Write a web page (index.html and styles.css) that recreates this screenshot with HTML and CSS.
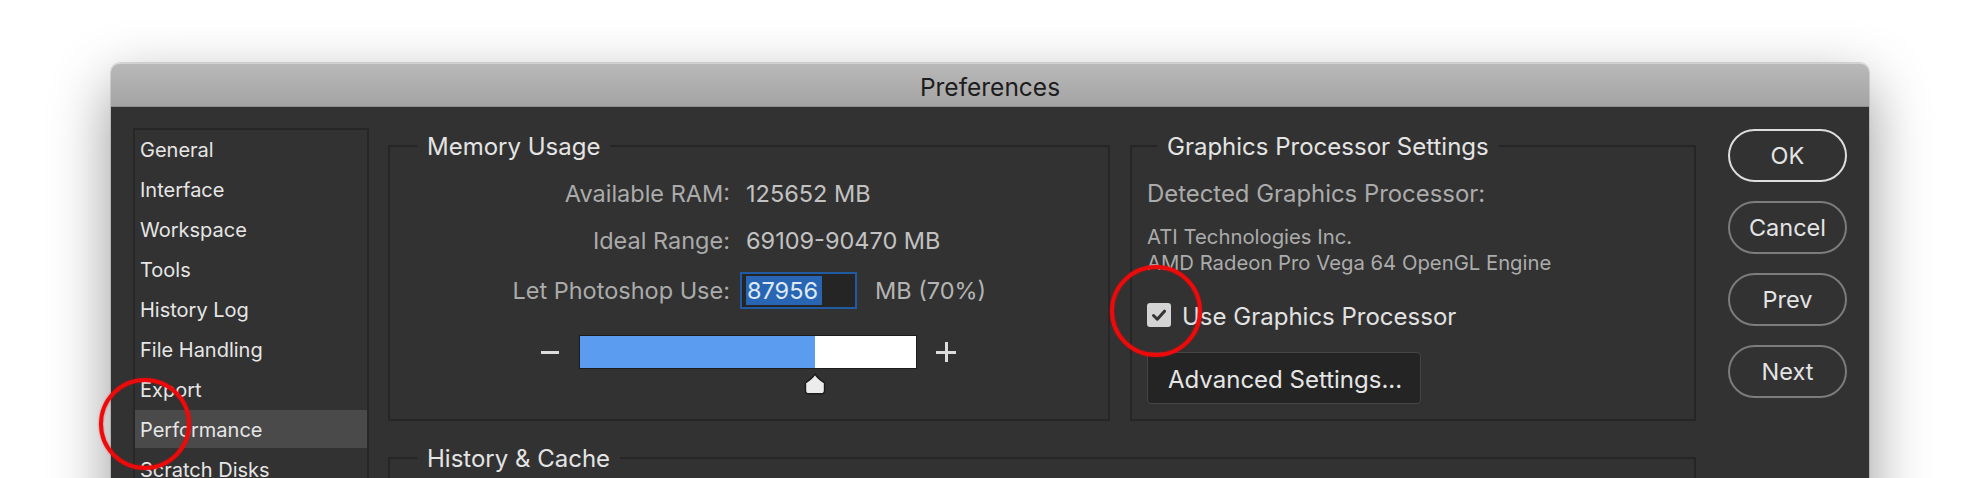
FILE: index.html
```html
<!DOCTYPE html>
<html>
<head>
<meta charset="utf-8">
<link rel="stylesheet" href="styles.css">
</head>
<body>
<div class="stage">
  <div class="window">
    <div class="titlebar">Preferences</div>
    <div class="wbody">
      <ul class="sidebar">
        <li>General</li>
        <li>Interface</li>
        <li>Workspace</li>
        <li>Tools</li>
        <li>History Log</li>
        <li>File Handling</li>
        <li>Export</li>
        <li class="active">Performance</li>
        <li>Scratch Disks</li>
        <li>Cursors</li>
      </ul>
      <div class="main">
        <div class="toprow">
          <fieldset class="group mem">
            <legend>Memory Usage</legend>
            <div class="rows">
              <div class="kv r1"><span class="k">Available RAM:</span><span class="v">125652 MB</span></div>
              <div class="kv r2"><span class="k">Ideal Range:</span><span class="v">69109-90470 MB</span></div>
              <div class="kv r3"><span class="k">Let Photoshop Use:</span><span class="input"><span class="sel">87956</span></span><span class="unit">MB (70%)</span></div>
              <div class="slider">
                <span class="minus"></span>
                <div class="track">
                  <div class="fill" style="width:70%"></div>
                  <svg class="thumb" style="left:70%" width="24" height="22" viewBox="0 0 24 22"><path d="M12 1.2 C14 4.5 17 7 21.5 10 L21.5 17.5 Q21.5 20.8 18.3 20.8 L5.7 20.8 Q2.5 20.8 2.5 17.5 L2.5 10 C7 7 10 4.5 12 1.2 Z" fill="#ececec" stroke="#1c1c1c" stroke-width="1.4"/></svg>
                </div>
                <span class="plus"></span>
              </div>
            </div>
          </fieldset>
          <fieldset class="group gpu">
            <legend>Graphics Processor Settings</legend>
            <div class="gpu-in">
              <div class="det">Detected Graphics Processor:</div>
              <div class="card">ATI Technologies Inc.<br>AMD Radeon Pro Vega 64 OpenGL Engine</div>
              <label class="check">
                <span class="box"><svg width="24" height="24" viewBox="0 0 24 24"><path d="M6.5 12.5 L10.3 16.2 L17.5 8.2" fill="none" stroke="#333" stroke-width="3" stroke-linecap="round" stroke-linejoin="round"/></svg></span>
                <span class="check-label">Use Graphics Processor</span>
              </label>
              <div class="adv">Advanced Settings...</div>
            </div>
          </fieldset>
        </div>
        <fieldset class="group hist">
          <legend>History &amp; Cache</legend>
          <div class="hist-in"></div>
        </fieldset>
      </div>
      <div class="buttons">
        <div class="btn primary">OK</div>
        <div class="btn">Cancel</div>
        <div class="btn">Prev</div>
        <div class="btn">Next</div>
      </div>
    </div>
    <div class="mark m1"></div>
    <div class="mark m2"></div>
  </div>
</div>
</body>
</html>
```

FILE: styles.css
```css
html, body {
  margin: 0;
  padding: 0;
  background: #ffffff;
  height: 478px;
  overflow: hidden;
  font-family: Inter, "Liberation Sans", Arial, sans-serif;
}

.stage {
  padding: 63px 0 0 111px;
}

.window {
  position: relative;
  width: 1758px;
  border-radius: 9px 9px 0 0;
  box-shadow: 0 22px 60px rgba(0, 0, 0, 0.42), 0 0 0 1px rgba(0, 0, 0, 0.12);
}

.titlebar {
  border-radius: 9px 9px 0 0;
  background: linear-gradient(#bab9ba, #a5a4a5);
  border-top: 1px solid #d2d2d2;
  border-bottom: 1px solid #8e8d8e;
  box-sizing: border-box;
  height: 44px;
  padding-top: 4px;
  display: flex;
  align-items: center;
  justify-content: center;
  font-size: 24.5px;
  color: #1d1d1d;
}

.wbody {
  background: #323232;
  display: flex;
  align-items: flex-start;
  padding: 21px 22px 0 22px;
  height: 430px;
  box-sizing: border-box;
}

.sidebar {
  list-style: none;
  margin: 0;
  padding: 2px 0 0 0;
  width: 236px;
  height: 420px;
  box-sizing: border-box;
  border: 2px solid #272727;
  flex: none;
}

.sidebar li {
  height: 36px;
  margin-bottom: 4px;
  display: flex;
  align-items: center;
  padding-left: 5px;
  font-size: 20px;
  color: #e6e6e6;
}

.sidebar li.active {
  background: #4a4a4a;
  margin-top: -2px;
  padding-top: 2px;
}

.main {
  width: 1308px;
  margin-left: 19px;
  margin-top: 3px;
  flex: none;
}

.toprow {
  display: flex;
  gap: 20px;
}

.group {
  margin: 0;
  padding: 0;
  min-width: 0;
  border: 2px solid #262626;
  box-sizing: border-box;
}

.group legend {
  padding: 0 10px;
  margin-left: 27px;
  font-size: 24px;
  line-height: 28px;
  padding-top: 2px;
  color: #e4e4e4;
}

.mem {
  width: 722px;
  height: 290px;
}

.gpu {
  width: 566px;
  height: 290px;
}

.gpu legend {
  margin-left: 25px;
}

.rows {
  padding-top: 12px;
}

.kv {
  display: grid;
  grid-template-columns: 340px auto auto;
  justify-content: start;
  align-items: center;
  column-gap: 10px;
  height: 40px;
  font-size: 23.5px;
}

.r2 {
  margin-top: 7px;
}

.r3 {
  margin-top: 10px;
}

.k {
  text-align: right;
  color: #ababab;
}

.v {
  padding-left: 6px;
  color: #c2c2c2;
}

.input {
  width: 117px;
  height: 37px;
  box-sizing: border-box;
  border: 2px solid #1f5aa3;
  background: #252525;
  padding: 2px 4px;
  display: flex;
}

.sel {
  background: #2866b3;
  color: #dfe8f5;
  display: flex;
  align-items: center;
  padding: 1px 1px 0;
  width: 76px;
  box-sizing: border-box;
}

.unit {
  margin-left: 8px;
  color: #b4b4b4;
}

.slider {
  display: flex;
  align-items: center;
  margin-top: 26px;
  margin-left: 151px;
}

.minus {
  width: 18px;
  height: 3px;
  background: #dcdcdc;
}

.plus {
  position: relative;
  width: 20px;
  height: 20px;
  margin-left: 20px;
}

.plus::before, .plus::after {
  content: "";
  position: absolute;
  background: #dcdcdc;
}

.plus::before {
  left: 0;
  top: 8.5px;
  width: 20px;
  height: 3px;
}

.plus::after {
  left: 8.5px;
  top: 0;
  width: 3px;
  height: 20px;
}

.track {
  position: relative;
  width: 336px;
  height: 32px;
  margin-left: 21px;
  background: #ffffff;
  box-shadow: 0 0 0 1px #1c1c1c;
}

.fill {
  height: 100%;
  background: #5b9bf0;
}

.thumb {
  position: absolute;
  top: 37px;
  margin-left: -12px;
}

.gpu-in {
  padding: 12px 0 0 15px;
}

.det {
  height: 40px;
  display: flex;
  align-items: center;
  font-size: 23.9px;
  color: #ababab;
}

.card {
  margin-top: 11px;
  font-size: 20.3px;
  line-height: 26px;
  color: #acacac;
}

.check {
  display: flex;
  align-items: center;
  height: 40px;
  margin-top: 19px;
}

.box {
  width: 24px;
  height: 24px;
  background: #d4d4d4;
  border-radius: 3px;
  display: flex;
}

.check-label {
  margin-left: 11px;
  font-size: 24px;
  padding-top: 2px;
  color: #e2e2e2;
}

.adv {
  margin-top: 17px;
  width: 274px;
  height: 52px;
  box-sizing: border-box;
  background: #242424;
  border: 1px solid #454545;
  border-radius: 4px;
  display: flex;
  align-items: center;
  padding: 3px 0 0 20px;
  font-size: 24px;
  color: #e6e6e6;
}

.hist {
  margin-top: 22px;
  width: 1308px;
}

.hist-in {
  height: 100px;
}

.buttons {
  margin-left: 32px;
  margin-top: 1px;
  display: flex;
  flex-direction: column;
  gap: 19px;
  flex: none;
}

.btn {
  width: 119px;
  height: 53px;
  box-sizing: border-box;
  border: 2px solid #7c7c7c;
  border-radius: 27px;
  display: flex;
  align-items: center;
  justify-content: center;
  font-size: 23.5px;
  color: #e4e4e4;
}

.btn.primary {
  border-color: #dedede;
}

.mark {
  position: absolute;
  width: 92px;
  height: 92px;
  box-sizing: border-box;
  border: 4px solid #ec0a0a;
  border-radius: 50%;
  box-shadow: 0 0 2px rgba(236, 10, 10, 0.6), inset 0 0 2px rgba(236, 10, 10, 0.6);
}

.m1 {
  left: -12px;
  top: 315px;
}

.m2 {
  left: 999px;
  top: 202px;
}
```
